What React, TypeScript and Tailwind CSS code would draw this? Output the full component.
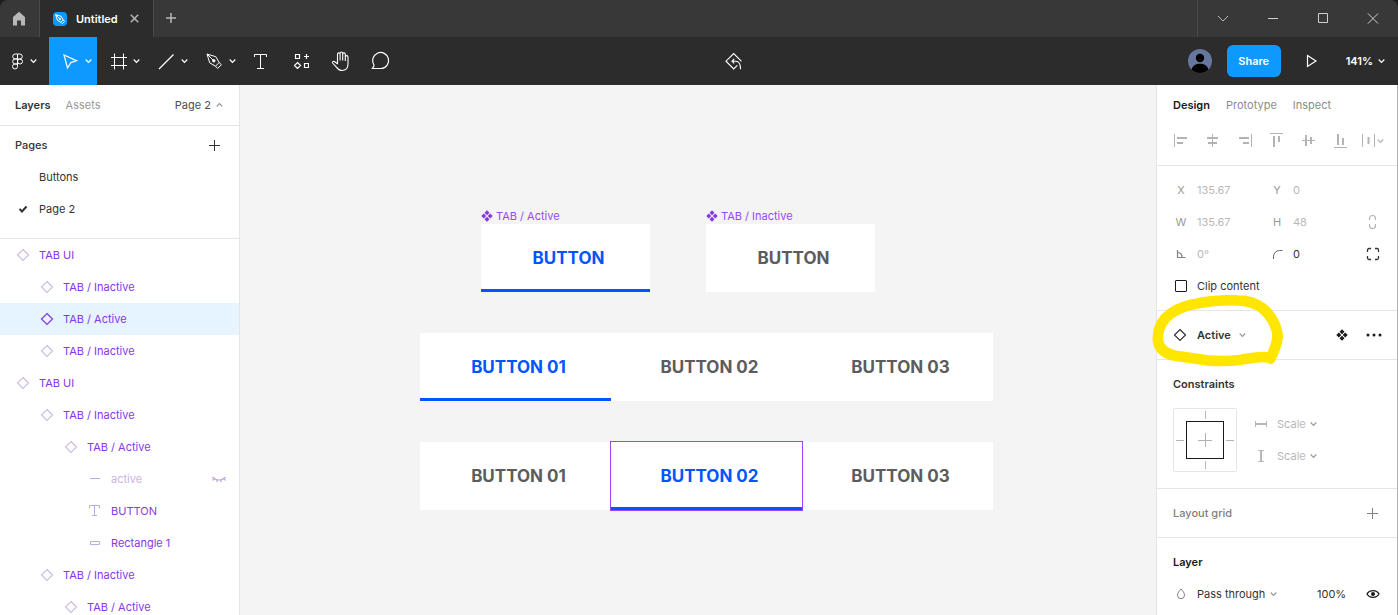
import { ReactNode, useState } from "react";

type IconProps = {
  w?: number;
  h?: number;
  className?: string;
  children: ReactNode;
};

function Icon({ w = 16, h = 16, className = "", children }: IconProps) {
  return (
    <svg
      width={w}
      height={h}
      viewBox={`0 0 ${w} ${h}`}
      fill="none"
      stroke="currentColor"
      aria-hidden="true"
      className={`shrink-0 ${className}`}
    >
      {children}
    </svg>
  );
}

const Chevron = ({ className = "" }: { className?: string }) => (
  <Icon w={8} h={6} className={className}>
    <path d="M.7 1.5 3.5 4.3 6.300 1.5" strokeWidth="1.2" />
  </Icon>
);

const Diamond = ({ className = "" }: { className?: string }) => (
  <Icon className={className}>
    <path d="M8 2.5 13.5 8 8 13.5 2.5 8Z" strokeWidth="1.2" />
  </Icon>
);

const ComponentIcon = ({ className = "" }: { className?: string }) => (
  <Icon w={12} h={12} className={className}>
    <path
      d="M6 .3 8.5 2.8 6 5.3 3.5 2.8ZM6 6.7 8.5 9.2 6 11.7 3.5 9.2ZM2.8 3.5 5.3 6 2.8 8.5.3 6ZM9.2 3.5 11.7 6 9.2 8.5 6.7 6Z"
      fill="currentColor"
      stroke="none"
    />
  </Icon>
);

const Plus = ({ className = "" }: { className?: string }) => (
  <Icon w={11} h={11} className={className}>
    <path d="M5.5 0v11M0 5.5h11" />
  </Icon>
);

const PenShape = () => (
  <>
    <path d="M1 1 3.7 9.8 9.5 13.2 13.2 9.5 9.8 3.7ZM1 1 7 7" />
    <circle cx="7.8" cy="7.8" r="1.2" fill="currentColor" />
    <path d="M9.5 13.2 11.7 15.4 15.4 11.7 13.2 9.5" />
  </>
);

function TitleBar() {
  return (
    <header className="flex h-[37px] shrink-0 rounded-t-lg bg-[#383838] text-[#b8b8b8]">
      <button
        aria-label="Home"
        className="flex w-10 items-center justify-center border-r border-[#4a4a4a]"
      >
        <Icon w={15}>
          <path
            d="M1 6 7 .8 13 6v8.500H9V9.500H5v5H1Z"
            fill="currentColor"
            stroke="none"
          />
        </Icon>
      </button>
      <div className="flex w-[114px] items-center border-r border-[#4a4a4a] bg-[#2c2c2c] pl-[13px]">
        <span className="flex h-[14px] w-[14px] items-center justify-center rounded-sm bg-[#0d99ff] text-white">
          <svg
            width="10"
            height="10"
            viewBox="0 0 16 16"
            fill="none"
            stroke="currentColor"
            strokeWidth="1.6"
            aria-hidden="true"
          >
            <PenShape />
          </svg>
        </span>
        <span className="ml-[9px] font-semibold text-white">Untitled</span>
        <button aria-label="Close tab" className="ml-3">
          <Icon w={9} h={9}>
            <path d="M.8.8 8.2 8.2M8.2.8.8 8.2" strokeWidth="1.5" />
          </Icon>
        </button>
      </div>
      <button aria-label="New tab" className="flex w-[35px] items-center justify-center">
        <Icon w={11} h={11}>
          <path d="M5 0v10M0 5h10" strokeWidth="1.5" />
        </Icon>
      </button>
      <div className="ml-auto flex border-l border-[#4a4a4a]">
        <button aria-label="More" className="flex w-[50px] items-center justify-center">
          <Icon w={12} h={12}>
            <path d="M1 3 6 8 11 3" />
          </Icon>
        </button>
        <button aria-label="Minimize" className="flex w-[50px] items-center justify-center text-[#d0d0d0]">
          <Icon w={12} h={12}>
            <path d="M1 5.5h10" />
          </Icon>
        </button>
        <button aria-label="Maximize" className="flex w-[50px] items-center justify-center text-[#d0d0d0]">
          <Icon w={12} h={12}>
            <path d="M1.5.5h9v9h-9Z" />
          </Icon>
        </button>
        <button aria-label="Close" className="flex w-[50px] items-center justify-center text-[#d0d0d0]">
          <Icon w={12} h={12}>
            <path d="M1 .5 11 10.5M11 .5 1 10.5" />
          </Icon>
        </button>
      </div>
    </header>
  );
}

type ToolProps = { label: string; active?: boolean; children: ReactNode };

function MenuTool({ label, active, children }: ToolProps) {
  return (
    <button
      aria-label={label}
      className={`flex h-12 w-12 shrink-0 items-center gap-[6px] pl-[13px] ${active ? "bg-[#0d99ff]" : ""}`}
    >
      {children}
      <Chevron />
    </button>
  );
}

function Tool({ label, children }: ToolProps) {
  return (
    <button aria-label={label} className="flex h-12 w-10 shrink-0 items-center justify-center">
      {children}
    </button>
  );
}

function Toolbar() {
  return (
    <div className="flex h-12 shrink-0 items-center bg-[#2c2c2c] text-white">
      <button aria-label="Main menu" className="flex h-12 w-[49px] shrink-0 items-center gap-[7px] pl-3">
        <Icon w={11} h={17}>
          <path d="M5.5 1H3.2a2.4 2.4 0 0 0 0 5h2.3ZM5.5 1h2.3a2.4 2.4 0 0 1 0 5H5.5ZM5.5 6H3.2a2.4 2.4 0 0 0 0 5h2.3ZM5.5 11H3.2a2.5 2.5 0 1 0 2.3 2.5ZM7.9 6a2.5 2.5 0 1 1-2.4 2.5A2.4 2.4 0 0 1 7.9 6Z" />
        </Icon>
        <Chevron />
      </button>
      <MenuTool label="Move" active>
        <Icon w={17} h={17}>
          <path d="M2 2 14.5 7.6 8.8 9.6 5.5 15Z" strokeWidth="1.2" />
        </Icon>
      </MenuTool>
      <MenuTool label="Frame">
        <Icon w={17} h={17}>
          <path d="M4.5.5v16M13.5.5v16M1 4.5h16M1 12.5h16" />
        </Icon>
      </MenuTool>
      <MenuTool label="Line">
        <Icon w={17} h={17}>
          <path d="M1 16 15.5 1.5" strokeWidth="1.2" />
        </Icon>
      </MenuTool>
      <MenuTool label="Pen">
        <Icon w={17} h={17}>
          <PenShape />
        </Icon>
      </MenuTool>
      <Tool label="Text">
        <Icon w={16} h={17}>
          <path d="M1.5 4V1.5h12V4M7.5 1.5v14M4 15.5h7" />
        </Icon>
      </Tool>
      <Tool label="Resources">
        <Icon w={16} h={16}>
          <path
            d="M2.5 1.5h4v4h-4ZM11.5 10.5h4v4h-4ZM13.5 1v5M11 3.5h5M4.5 9.5l3 3-3 3-3-3Z"
            strokeWidth="1.2"
          />
        </Icon>
      </Tool>
      <Tool label="Hand">
        <Icon w={20} h={21}>
          <path
            d="M6.500 10.500V3.200a1.300 1.300 0 0 1 2.600 0V9.500M9.100 9V2.300a1.300 1.300 0 0 1 2.600 0V9M11.700 9.500V3.200a1.300 1.300 0 0 1 2.600 0V10M14.300 6a1.300 1.300 0 0 1 2.700 0v7c0 4-2.300 6.500-6 6.500-3 0-4.300-1.500-5.600-3.400L1.600 12c-.7-1 .7-2.300 1.700-1.500L6.500 12.800V10"
            strokeLinejoin="round"
            strokeWidth="1.1"
          />
        </Icon>
      </Tool>
      <Tool label="Comment">
        <Icon w={20} h={20}>
          <path
            d="M1.200 17.500c1.200-1 1.800-2 1.800-3.500A8 8 0 1 1 10 17.500Z"
            strokeWidth="1.2"
            strokeLinejoin="round"
          />
        </Icon>
      </Tool>
      <div className="grow-[8]" />
      <button aria-label="Return to instance" className="shrink-0">
        <Icon w={18} h={18}>
          <path d="M16.5 9.3 8.7 1.5 1 9.2 8.700 17 12.300 13.400" strokeWidth="1.1" />
          <path d="M6.800 9.200h4c3 0 4.700 2.300 4.700 8M9.200 7 7 9.200l2.200 2.200" strokeWidth="1.1" />
        </Icon>
      </button>
      <div className="grow-[11]" />
      <button aria-label="Account" className="shrink-0">
        <Icon w={24} h={24}>
          <circle cx="12" cy="12" r="12" fill="#66779f" stroke="none" />
          <circle cx="12" cy="9" r="4.2" fill="#000" stroke="none" />
          <path
            d="M3.5 20.4C5 16.5 8 14.8 12 14.8s7 1.7 8.5 5.600A12 12 0 0 1 3.5 20.4Z"
            fill="#000"
            stroke="none"
          />
        </Icon>
      </button>
      <button className="ml-[15px] h-8 w-[54px] shrink-0 rounded-md bg-[#0d99ff] font-semibold">
        Share
      </button>
      <button aria-label="Present" className="ml-[25px] shrink-0">
        <Icon w={12} h={14}>
          <path d="M1.5 1.5 10 7 1.5 12.5Z" strokeWidth="1.2" />
        </Icon>
      </button>
      <button className="mr-3 ml-7 flex shrink-0 items-center gap-[5px] font-semibold">
        141%
        <Chevron />
      </button>
    </div>
  );
}

type Layer = {
  name: string;
  depth: number;
  kind: "diamond" | "line" | "text" | "rect";
  selected?: boolean;
  hidden?: boolean;
};

const layers: Layer[] = [
  { name: "TAB UI", depth: 0, kind: "diamond" },
  { name: "TAB / Inactive", depth: 1, kind: "diamond" },
  { name: "TAB / Active", depth: 1, kind: "diamond", selected: true },
  { name: "TAB / Inactive", depth: 1, kind: "diamond" },
  { name: "TAB UI", depth: 0, kind: "diamond" },
  { name: "TAB / Inactive", depth: 1, kind: "diamond" },
  { name: "TAB / Active", depth: 2, kind: "diamond" },
  { name: "active", depth: 3, kind: "line", hidden: true },
  { name: "BUTTON", depth: 3, kind: "text" },
  { name: "Rectangle 1", depth: 3, kind: "rect" },
  { name: "TAB / Inactive", depth: 1, kind: "diamond" },
  { name: "TAB / Active", depth: 2, kind: "diamond" },
];

const indents = ["pl-[15px]", "pl-[39px]", "pl-[63px]", "pl-[87px]"];

function LayerIcon({ kind, selected }: { kind: Layer["kind"]; selected?: boolean }) {
  if (kind === "diamond") {
    return <Diamond className={selected ? "text-[#8638e5]" : "text-[#cdbce6]"} />;
  }
  return (
    <Icon className="text-[#bfa8e0]">
      {kind === "line" && <path d="M3 7.5h10" />}
      {kind === "text" && <path d="M2.5 5.5v-3h10v3M7.5 2.5v10M5 12.5h5" />}
      {kind === "rect" && <path d="M3.5 6.5h9v3h-9Z" />}
    </Icon>
  );
}

function LeftPanel() {
  return (
    <aside className="flex w-60 shrink-0 flex-col overflow-hidden border-r border-[#e5e5e5] bg-white">
      <div className="flex h-10 shrink-0 items-center pl-[15px]">
        <button className="font-semibold">Layers</button>
        <button className="ml-[15px] text-[#999]">Assets</button>
        <button className="mr-4 ml-auto flex items-center gap-1 text-[#4d4d4d]">
          Page 2
          <Chevron className="rotate-180 text-[#999]" />
        </button>
      </div>
      <section className="shrink-0 border-t border-[#e5e5e5] pt-[3px] pb-[13px]">
        <div className="flex h-8 items-center justify-between pr-[19px] pl-[15px]">
          <h2 className="font-medium">Pages</h2>
          <button aria-label="Add page">
            <Plus />
          </button>
        </div>
        <button className="flex h-8 w-full items-center pl-[39px]">Buttons</button>
        <button className="flex h-8 w-full items-center gap-2 pl-[15px]">
          <Icon>
            <path d="M4.5 8 7 10.5 11.5 5.5" strokeWidth="2" />
          </Icon>
          Page 2
        </button>
      </section>
      <ul className="border-t border-[#e5e5e5] text-[#8638e5]">
        {layers.map((layer, i) => (
          <li
            key={i}
            className={`flex h-8 items-center gap-2 pr-3 ${indents[layer.depth]} ${layer.selected ? "bg-[#e5f4ff]" : ""}`}
          >
            <LayerIcon kind={layer.kind} selected={layer.selected} />
            <span className={layer.hidden ? "text-[#c9b5e4]" : ""}>{layer.name}</span>
            {layer.hidden && (
              <button aria-label="Show layer" className="ml-auto text-[#bfa8e0]">
                <Icon>
                  <path
                    d="M1.5 6c3.5 4 9.5 4 13 0M3.3 7.5 1.5 9.5M6.300 8.8l-.6 2.4M9.7 8.8l.6 2.4M12.7 7.5l1.8 2"
                    strokeWidth="1.2"
                  />
                </Icon>
              </button>
            )}
          </li>
        ))}
      </ul>
    </aside>
  );
}

type TabProps = { text: string; active?: boolean; selected?: boolean };

function TabButton({ text, active, selected }: TabProps) {
  return (
    <button
      className={`relative h-[68px] flex-1 border-y-[3px] border-t-transparent bg-white pl-[6px] text-[17px] font-bold ${
        active ? "border-b-[#0055ff] text-[#0055ff]" : "border-b-transparent text-[#5c5c5c]"
      } ${selected ? "z-10" : ""}`}
    >
      {text}
      {selected && <span className="absolute -inset-x-px -inset-y-1 border border-[#9747ff]" />}
    </button>
  );
}

// frames sit freely on the canvas, so they keep their own coordinates
function Canvas() {
  return (
    <main className="relative min-w-0 flex-1 overflow-hidden bg-[#f4f4f4]">
      <div className="absolute top-[123px] left-[241px] w-[169px]">
        <div className="flex h-4 items-center gap-[3px] text-[#9747ff]">
          <ComponentIcon className="text-[#8638e5]" />
          TAB / Active
        </div>
        <div className="flex">
          <TabButton text="BUTTON" active />
        </div>
      </div>
      <div className="absolute top-[123px] left-[466px] w-[169px]">
        <div className="flex h-4 items-center gap-[3px] text-[#9747ff]">
          <ComponentIcon className="text-[#8638e5]" />
          TAB / Inactive
        </div>
        <div className="flex">
          <TabButton text="BUTTON" />
        </div>
      </div>
      <div className="absolute top-[248px] left-[180px] flex w-[573px]">
        <TabButton text="BUTTON 01" active />
        <TabButton text="BUTTON 02" />
        <TabButton text="BUTTON 03" />
      </div>
      <div className="absolute top-[357px] left-[180px] flex w-[573px]">
        <TabButton text="BUTTON 01" />
        <TabButton text="BUTTON 02" active selected />
        <TabButton text="BUTTON 03" />
      </div>
    </main>
  );
}

type FieldProps = { id: string; label: ReactNode; value: string; enabled?: boolean };

function Field({ id, label, value, enabled }: FieldProps) {
  return (
    <div className="flex h-8 w-24 items-center">
      <label htmlFor={id} className="flex w-8 justify-center text-[#999]">
        {label}
      </label>
      <input
        id={id}
        aria-label={id}
        defaultValue={value}
        className={`w-14 bg-transparent outline-none ${enabled ? "text-[#333]" : "text-[#b8b8b8]"}`}
      />
    </div>
  );
}

type PickerProps = { label: string; options: string[]; className?: string };

function Picker({ label, options, className = "gap-1" }: PickerProps) {
  return (
    <span className={`flex items-center ${className}`}>
      <select
        aria-label={label}
        className="field-sizing-content appearance-none bg-transparent outline-none"
      >
        {options.map((o) => (
          <option key={o}>{o}</option>
        ))}
      </select>
      <Chevron className="text-[#999]" />
    </span>
  );
}

const aligns = [
  { label: "Align left", thick: "M4 5h10M4 10h6", thin: "M1.5 1v13" },
  { label: "Align horizontal centers", thick: "M2 5h11M3 10h9", thin: "M7.5 1v13" },
  { label: "Align right", thick: "M2 5h10M6 10h6", thin: "M14.5 1v13" },
  { label: "Align top", thick: "M5 3v11M10 3v6", thin: "M1 .5h13" },
  { label: "Align vertical centers", thick: "M5 2v11M10 4v7", thin: "M1 7.5h13" },
  { label: "Align bottom", thick: "M5 1v11M10 5v7", thin: "M1 14.5h13" },
];

function RightPanel() {
  const [clip, setClip] = useState(false);

  return (
    <aside className="w-[242px] shrink-0 border-r border-l border-r-[#b3b3b3] border-l-[#e5e5e5] bg-white">
      <div className="flex h-10 items-center gap-4 pl-4 text-[#8c8c8c]">
        <button className="font-semibold text-[#1a1a1a]">Design</button>
        <button>Prototype</button>
        <button>Inspect</button>
      </div>
      <div className="flex pb-2 pl-2 text-[#b3b3b3]">
        {aligns.map((a) => (
          <button key={a.label} aria-label={a.label} className="flex h-8 w-8 items-center justify-center">
            <Icon>
              <path d={a.thin} />
              <path d={a.thick} strokeWidth="2" />
            </Icon>
          </button>
        ))}
        <button aria-label="Distribute" className="flex h-8 w-8 items-center justify-center gap-px">
          <Icon w={14}>
            <path d="M.5 1v13M12.5 1v13" />
            <path d="M6.500 4v7" strokeWidth="2" />
          </Icon>
          <Chevron />
        </button>
      </div>

      <section className="border-t border-[#e5e5e5] py-2 pl-2">
        <div className="flex">
          <Field id="x" label="X" value="135.67" />
          <Field id="y" label="Y" value="0" />
        </div>
        <div className="flex">
          <Field id="w" label="W" value="135.67" />
          <Field id="h" label="H" value="48" />
          <button
            aria-label="Constrain proportions"
            className="flex h-8 w-8 items-center justify-center text-[#b3b3b3]"
          >
            <Icon>
              <path
                d="M4.5 6V4.5a3 3 0 0 1 6 0V6M4.5 10v1.500a3 3 0 0 0 6 0V10"
                strokeWidth="1.2"
              />
            </Icon>
          </button>
        </div>
        <div className="flex">
          <Field
            id="rotation"
            value="0°"
            label={
              <Icon className="text-[#808080]">
                <path d="M4.5 4v7.500h8M4.500 6.500c3 0 4.500 2 4.500 5" strokeWidth="1.2" />
              </Icon>
            }
          />
          <Field
            id="radius"
            value="0"
            enabled
            label={
              <Icon className="text-[#666]">
                <path d="M4.5 13v-2.500A6 6 0 0 1 10.5 4.500h3" />
              </Icon>
            }
          />
          <button aria-label="Independent corners" className="flex h-8 w-8 items-center justify-center">
            <Icon>
              <path
                d="M2.5 6V4a1.5 1.5 0 0 1 1.500-1.500h2M10 2.5h2A1.5 1.5 0 0 1 13.500 4v2M13.5 10v2a1.5 1.5 0 0 1-1.500 1.500h-2M6 13.5H4A1.5 1.5 0 0 1 2.500 12v-2"
                strokeWidth="1.3"
              />
            </Icon>
          </button>
        </div>
        <div className="flex h-8 items-center gap-[10px] pl-[10px]">
          <input
            id="clip"
            type="checkbox"
            checked={clip}
            onChange={(e) => setClip(e.target.checked)}
            className="h-3 w-3 appearance-none rounded-[1px] border border-[#1a1a1a] checked:bg-[#1a1a1a]"
          />
          <label htmlFor="clip">Clip content</label>
        </div>
      </section>

      <section className="relative flex h-[49px] items-center border-t border-[#e5e5e5] pr-[7px] pl-[15px]">
        <Diamond />
        <Picker label="Variant" options={["Active", "Inactive"]} className="ml-[9px] gap-2 font-semibold" />
        <button aria-label="Go to main component" className="ml-auto flex w-8 justify-center text-[#1a1a1a]">
          <ComponentIcon />
        </button>
        <button aria-label="More options" className="flex w-8 justify-center text-[#1a1a1a]">
          <Icon>
            <g fill="currentColor" stroke="none">
              <circle cx="2" cy="8" r="1.5" />
              <circle cx="8" cy="8" r="1.5" />
              <circle cx="14" cy="8" r="1.5" />
            </g>
          </Icon>
        </button>
        {/* marker stroke around the variant */}
        <svg
          width="144"
          height="76"
          viewBox="-3 90 432 228"
          fill="none"
          aria-hidden="true"
          className="pointer-events-none absolute -top-4 -left-2"
        >
          <path
            d="M361 281C372 256 386 232 382 204C377 180 362 150 338 130C312 110 288 106 262 106C228 105 170 109 130 118C98 124 68 138 46 160C28 180 22 205 24 228C28 252 46 266 76 272L170 286C205 289 245 288 275 284C305 279 335 273 352 277"
            stroke="#ffe600"
            strokeWidth="32"
            strokeLinecap="round"
            strokeLinejoin="round"
          />
        </svg>
      </section>

      <section className="border-t border-[#e5e5e5] pt-2 pb-4 pl-4">
        <h2 className="flex h-8 items-center font-semibold">Constraints</h2>
        <div className="mt-2 flex">
          <Icon w={64} h={64}>
            <rect x=".5" y=".5" width="63" height="63" rx="1" stroke="#e5e5e5" />
            <rect x="13.5" y="13.5" width="37" height="37" stroke="#1a1a1a" />
            <path
              d="M32.5 3v8M32.5 53v8M3 32.5h8M53 32.5h8M32.5 25v14M25 32.5h14"
              stroke="#b3b3b3"
            />
          </Icon>
          <div className="ml-4 text-[#b8b8b8]">
            <div className="flex h-8 items-center gap-2">
              <Icon>
                <path d="M2.5 5v6M13.5 5v6" />
                <path d="M3 8h10" strokeWidth="2" />
              </Icon>
              <Picker label="Horizontal constraint" options={["Scale", "Left", "Right"]} />
            </div>
            <div className="flex h-8 items-center gap-2">
              <Icon>
                <path d="M5 2.5h6M5 13.5h6" />
                <path d="M8 3v10" strokeWidth="2" />
              </Icon>
              <Picker label="Vertical constraint" options={["Scale", "Top", "Bottom"]} />
            </div>
          </div>
        </div>
      </section>

      <section className="flex h-[49px] items-center justify-between border-t border-[#e5e5e5] pr-[19px] pl-4 font-medium text-[#808080]">
        <h2>Layout grid</h2>
        <button aria-label="Add layout grid">
          <Plus />
        </button>
      </section>

      <section className="border-t border-[#e5e5e5] pt-2 pl-4">
        <h2 className="flex h-8 items-center font-semibold text-[#1a1a1a]">Layer</h2>
        <div className="flex h-8 items-center pr-4">
          <Icon className="text-[#808080]">
            <path d="M8 3C6 5.300 4.500 7 4.500 9.200a3.500 3.500 0 0 0 7 0C11.500 7 10 5.300 8 3Z" />
          </Icon>
          <Picker label="Blend mode" options={["Pass through", "Normal"]} className="ml-2 gap-[5px]" />
          <input
            aria-label="Opacity"
            defaultValue="100%"
            className="ml-auto w-10 bg-transparent outline-none"
          />
          <button aria-label="Toggle visibility" className="ml-2 text-[#1a1a1a]">
            <Icon>
              <path d="M2 8c2.500-4.500 9.500-4.500 12 0-2.500 4.500-9.500 4.500-12 0Z" strokeWidth="1.3" />
              <circle cx="8" cy="8" r="2" fill="currentColor" stroke="none" />
            </Icon>
          </button>
        </div>
      </section>
    </aside>
  );
}

export default function App() {
  return (
    <div className="flex h-screen flex-col overflow-hidden bg-[#1f1f1f] font-['Inter',sans-serif] text-[11px] leading-4 text-[#333]">
      <TitleBar />
      <Toolbar />
      <div className="flex min-h-0 flex-1">
        <LeftPanel />
        <Canvas />
        <RightPanel />
      </div>
    </div>
  );
}
